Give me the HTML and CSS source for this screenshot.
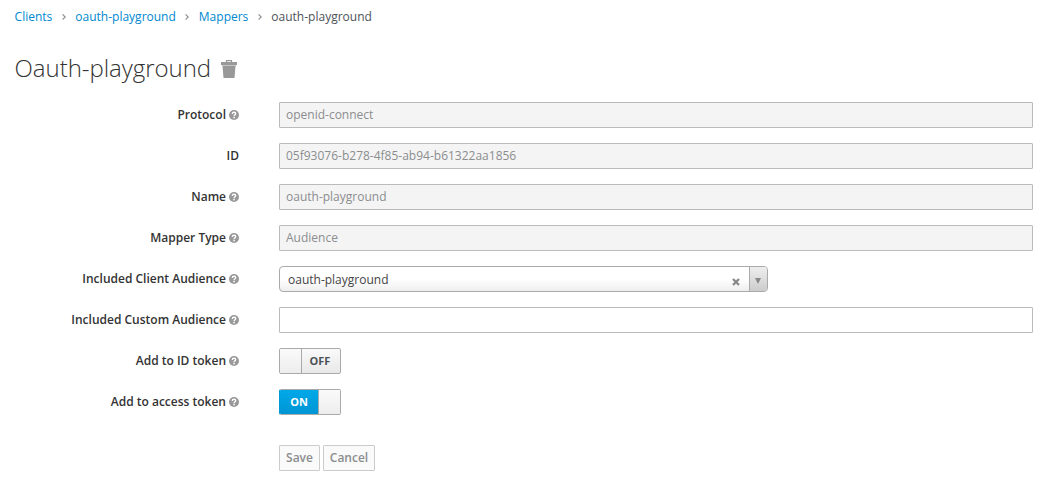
FILE: index.html
```html
<!DOCTYPE html>
<html lang="en">
<head>
<meta charset="utf-8">
<title>Oauth-playground</title>
<link rel="stylesheet" href="styles.css">
</head>
<body>
<svg class="defs" aria-hidden="true">
  <symbol id="help" viewBox="0 0 10 10">
    <circle cx="5" cy="5" r="5" fill="#999"/>
    <path d="M3.200 3.900C3.400 2.600 4.200 2.300 5 2.300c1 0 1.700.6 1.700 1.400C6.700 4.800 5.100 4.800 5.100 6.200" fill="none" stroke="#fff" stroke-width="1.400"/>
    <rect x="4.300" y="6.900" width="1.500" height="1.400" fill="#fff"/>
  </symbol>
  <symbol id="chevron" viewBox="0 0 4 6">
    <path d="M.6.400 3.200 3 .6 5.600" fill="none" stroke="#8b8b8b" stroke-width="1.100"/>
  </symbol>
</svg>
<nav class="breadcrumb">
  <a href="#">Clients</a><svg class="chevron"><use href="#chevron"/></svg>
  <a href="#">oauth-playground</a><svg class="chevron"><use href="#chevron"/></svg>
  <a href="#">Mappers</a><svg class="chevron"><use href="#chevron"/></svg>
  <span>oauth-playground</span>
</nav>
<h1 class="title"><span>Oauth-playground</span>
  <svg class="trash" viewBox="0 0 16 18"><path d="M5.500 3V.6h5V3" fill="none" stroke="#999" stroke-width="1.200"/><path d="M0 2h16v3H0z" fill="#999"/><path d="M1 5h14v1H1z" fill="#c4c4c4"/><path d="M1.500 6h13L13.500 18h-11z" fill="#999"/></svg>
</h1>
<form class="form">
  <div class="row"><label>Protocol <svg class="help"><use href="#help"/></svg></label><input class="field" value="openid-connect" disabled></div>
  <div class="row"><label>ID</label><input class="field" value="05f93076-b278-4f85-ab94-b61322aa1856" disabled></div>
  <div class="row"><label>Name <svg class="help"><use href="#help"/></svg></label><input class="field" value="oauth-playground" disabled></div>
  <div class="row"><label>Mapper Type <svg class="help"><use href="#help"/></svg></label><input class="field" value="Audience" disabled></div>
  <div class="row"><label>Included Client Audience <svg class="help"><use href="#help"/></svg></label>
    <div class="select"><span class="chosen">oauth-playground</span>
      <svg class="clear" viewBox="0 0 8 8"><path d="M1 1l6 6M7 1L1 7" stroke="#888" stroke-width="2.300"/></svg>
      <span class="arrow"><svg viewBox="0 0 6 6"><path d="M0 0h6L3 6z" fill="#888"/></svg></span>
    </div></div>
  <div class="row"><label>Included Custom Audience <svg class="help"><use href="#help"/></svg></label><input class="field"></div>
  <div class="row"><label>Add to ID token <svg class="help"><use href="#help"/></svg></label><div class="switch"><span class="knob knob-left"></span><span class="state state-off">OFF</span></div></div>
  <div class="row"><label>Add to access token <svg class="help"><use href="#help"/></svg></label><div class="switch switch-on"><span class="state state-on">ON</span><span class="knob knob-right"></span></div></div>
  <div class="actions"><button type="button" class="save" disabled>Save</button><button type="button" class="cancel" disabled>Cancel</button></div>
</form>
</body>
</html>
```
FILE: styles.css
```css
* { box-sizing: border-box; }
body { margin: 0; padding: 8px 26px 0 15px; background: #fff; color: #333; font: 12px/17px "Open Sans", sans-serif; }
.defs { display: none; }
.breadcrumb { display: flex; align-items: center; height: 17px; margin-left: -0.4px; color: #4d5258; }
.breadcrumb a { color: #0088ce; text-decoration: none; }
.chevron { width: 4px; height: 6px; margin: 1px 9.500px 0 9.500px; }
.title { display: flex; align-items: flex-start; margin: 26px 0 0 -0.5px; height: 51px; font-size: 24px; font-weight: 300; line-height: 33px; letter-spacing: -0.03px; }
.trash { width: 16px; height: 18px; margin: 9px 0 0 10px; }
.row { display: flex; align-items: flex-start; height: 41px; }
label { width: 224px; margin-right: 40px; display: flex; justify-content: flex-end; align-items: center; height: 24px; font-weight: 600; white-space: nowrap; }
.help { width: 10px; height: 10px; margin: 2px 0 0 3px; }
.field { flex: 1; min-width: 0; height: 26px; margin: 0; border: 1px solid #bbb; border-radius: 1px; padding: 0 6px 1px; color: #333; background: #fff; font: 12px "Open Sans", sans-serif; }
.field:disabled { background: #f4f4f4; color: #8b8d8f; }
.select { display: flex; width: 489px; height: 26px; border: 1px solid #aaa; border-radius: 4px; background: linear-gradient(#fff 50%, #eee); overflow: hidden; }
.chosen { flex: 1; padding-left: 8px; line-height: 26px; color: #444; }
.clear { width: 8px; height: 8px; margin: 11px 9px 0 0; }
.arrow { width: 18px; border-left: 1px solid #aaa; background: linear-gradient(#eee, #ccc); display: flex; align-items: center; justify-content: center; }
.arrow svg { width: 6px; height: 6px; margin: 3px 1px 0 0; }
.switch { display: flex; width: 62px; height: 26px; border: 1px solid #aaa; border-radius: 2px; overflow: hidden; background: linear-gradient(#fafafa, #e8e8e8); }
.switch-on { border-left-color: #0099d3; }
.knob { width: 22px; background: linear-gradient(#fafafa, #ededed); }
.knob-left { border-right: 1px solid #aaa; }
.knob-right { border-left: 1px solid #aaa; }
.state { flex: 1; font-size: 11px; font-weight: 700; line-height: 24px; text-align: center; color: #4d5258; }
.state-off { padding-right: 2px; }
.state-on { color: #fff; background: linear-gradient(#00a8e8, #0095d5); }
.actions { display: flex; gap: 3px; margin: 15px 0 0 264px; }
.actions button { height: 26px; padding: 0 0 1px; border: 1px solid #ccc; border-radius: 1px; background: #fafafa; color: #8b8d8f; font: 600 12px "Open Sans", sans-serif; }
.save { width: 41px; }
.cancel { width: 52px; }
```
